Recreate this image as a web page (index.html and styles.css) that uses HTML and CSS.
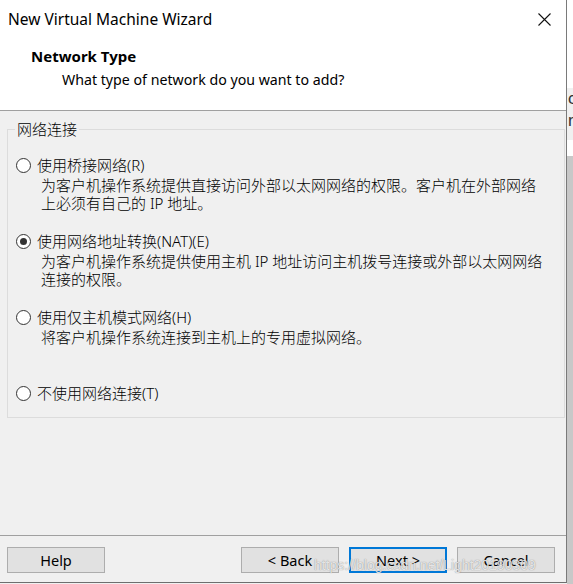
FILE: index.html
```html
<!DOCTYPE html>
<html lang="zh">
<head>
<meta charset="utf-8">
<title>New Virtual Machine Wizard</title>
<link rel="stylesheet" href="styles.css">
</head>
<body>
<div class="screen">
  <div class="window">
    <div class="top">
      <div class="titlebar">
        <span class="title">New Virtual Machine Wizard</span>
        <svg class="close" width="13" height="13" viewBox="0 0 13 13"><path d="M0.5 0.5 L12.5 12.5 M12.5 0.5 L0.5 12.5" stroke="#111" stroke-width="1.1" fill="none"/></svg>
      </div>
      <div class="header">
        <div class="h-title">Network Type</div>
        <div class="h-sub">What type of network do you want to add?</div>
      </div>
    </div>
    <div class="body">
      <fieldset class="group">
        <legend class="legend">网络连接</legend>
        <div class="opt">
          <div class="opt-row"><span class="radio"></span><span class="opt-label">使用桥接网络(R)</span></div>
          <div class="opt-desc">
            <div class="desc-line">为客户机操作系统提供直接访问外部以太网网络的权限。客户机在外部网络</div>
            <div class="desc-line">上必须有自己的 IP 地址。</div>
          </div>
        </div>
        <div class="opt">
          <div class="opt-row"><span class="radio checked"></span><span class="opt-label">使用网络地址转换(NAT)(E)</span></div>
          <div class="opt-desc">
            <div class="desc-line">为客户机操作系统提供使用主机 IP 地址访问主机拨号连接或外部以太网网络</div>
            <div class="desc-line">连接的权限。</div>
          </div>
        </div>
        <div class="opt">
          <div class="opt-row"><span class="radio"></span><span class="opt-label">使用仅主机模式网络(H)</span></div>
          <div class="opt-desc">
            <div class="desc-line">将客户机操作系统连接到主机上的专用虚拟网络。</div>
          </div>
        </div>
        <div class="opt opt-last">
          <div class="opt-row"><span class="radio"></span><span class="opt-label">不使用网络连接(T)</span></div>
        </div>
      </fieldset>
    </div>
    <div class="footer">
      <button class="btn">Help</button>
      <div class="nav">
        <button class="btn">&lt; Back</button>
        <button class="btn btn-default">Next &gt;</button>
        <button class="btn">Cancel</button>
      </div>
    </div>
    <div class="watermark">https://blog.csdn.net/Light20190309</div>
  </div>
  <div class="outside">
    <div class="outside-text">c<br>r</div>
    <div class="outside-bar"></div>
  </div>
</div>
</body>
</html>
```

FILE: styles.css
```css
html, body {
  margin: 0;
  padding: 0;
  background: #f0f0f0;
}

body {
  font-family: "Noto Sans", "Noto Sans CJK SC", sans-serif;
  color: #000;
}

.screen {
  display: flex;
  width: 573px;
  height: 584px;
  overflow: hidden;
}

.window {
  position: relative;
  width: 566px;
  height: 582px;
  border-right: 1px solid #7a7a7a;
  border-bottom: 1px solid #6e6e6e;
  background: #f0f0f0;
  display: flex;
  flex-direction: column;
  flex-shrink: 0;
}

.top {
  height: 110px;
  background: #fff;
  border-bottom: 1px solid #a0a0a0;
}

.titlebar {
  height: 38px;
  display: flex;
  align-items: center;
  justify-content: space-between;
  padding: 0 15px 0 8px;
}

.title {
  font-size: 15.5px;
  line-height: 38px;
  color: #000;
}

.close {
  display: block;
}

.header {
  padding: 8px 0 0 31px;
}

.h-title {
  font-size: 15px;
  font-weight: 700;
  line-height: 20px;
}

.h-sub {
  margin-top: 4px;
  padding-left: 31px;
  font-size: 14.2px;
  line-height: 20px;
}

.body {
  flex: 1;
  padding: 10px 0 0 7px;
}

.group {
  width: 548px;
  margin: 0;
  padding: 16px 0 13px 8px;
  border: 1px solid #dcdcdc;
  box-sizing: content-box;
}

.legend {
  margin-left: -1px;
  padding: 0 2px;
  font-size: 15px;
  font-weight: 300;
  line-height: 17px;
  color: #000;
}

.opt {
  height: 76px;
}

.opt-last {
  height: 22px;
}

.opt-row {
  height: 22px;
  display: flex;
  align-items: center;
  gap: 6px;
}

.radio {
  width: 13px;
  height: 13px;
  border: 1px solid #333;
  border-radius: 50%;
  background: #fff;
  display: flex;
  align-items: center;
  justify-content: center;
  flex-shrink: 0;
}

.radio.checked::after {
  content: "";
  width: 7px;
  height: 7px;
  border-radius: 50%;
  background: #333;
}

.opt-label {
  font-size: 15px;
  font-weight: 300;
  line-height: 22px;
}

.opt-desc {
  padding-left: 25px;
  font-size: 15px;
  font-weight: 300;
  white-space: nowrap;
}

.desc-line {
  height: 18px;
  line-height: 18px;
}

.footer {
  border-top: 1px solid #a0a0a0;
  padding: 11px 11px 0 7px;
  display: flex;
  justify-content: space-between;
  align-items: flex-start;
  box-sizing: border-box;
  height: 47px;
}

.nav {
  display: flex;
  gap: 10px;
}

.btn {
  width: 98px;
  height: 26px;
  box-sizing: border-box;
  border: 1px solid #adadad;
  background: #e1e1e1;
  font-family: "Noto Sans", sans-serif;
  font-size: 14.5px;
  color: #000;
  padding: 0;
  margin: 0;
}

.btn-default {
  border: 2px solid #0078d7;
}

.watermark {
  position: absolute;
  left: 314px;
  top: 556px;
  font-family: "Liberation Sans", sans-serif;
  font-size: 14px;
  line-height: 18px;
  color: rgba(255, 255, 255, 0.78);
  text-shadow: 0 0 1px rgba(90, 90, 90, 0.8);
  white-space: nowrap;
}

.outside {
  flex: 1;
  background: #fff;
  display: flex;
  flex-direction: column;
  overflow: hidden;
}

.outside-text {
  margin-top: 88px;
  padding-left: 1px;
  font-family: "Liberation Sans", sans-serif;
  font-size: 17px;
  line-height: 22px;
  color: #333;
  height: 52px;
  background: #f0f0f0;
}

.outside-bar {
  flex: 1;
  margin-top: 16px;
  background: #c8c8c8;
}
```
